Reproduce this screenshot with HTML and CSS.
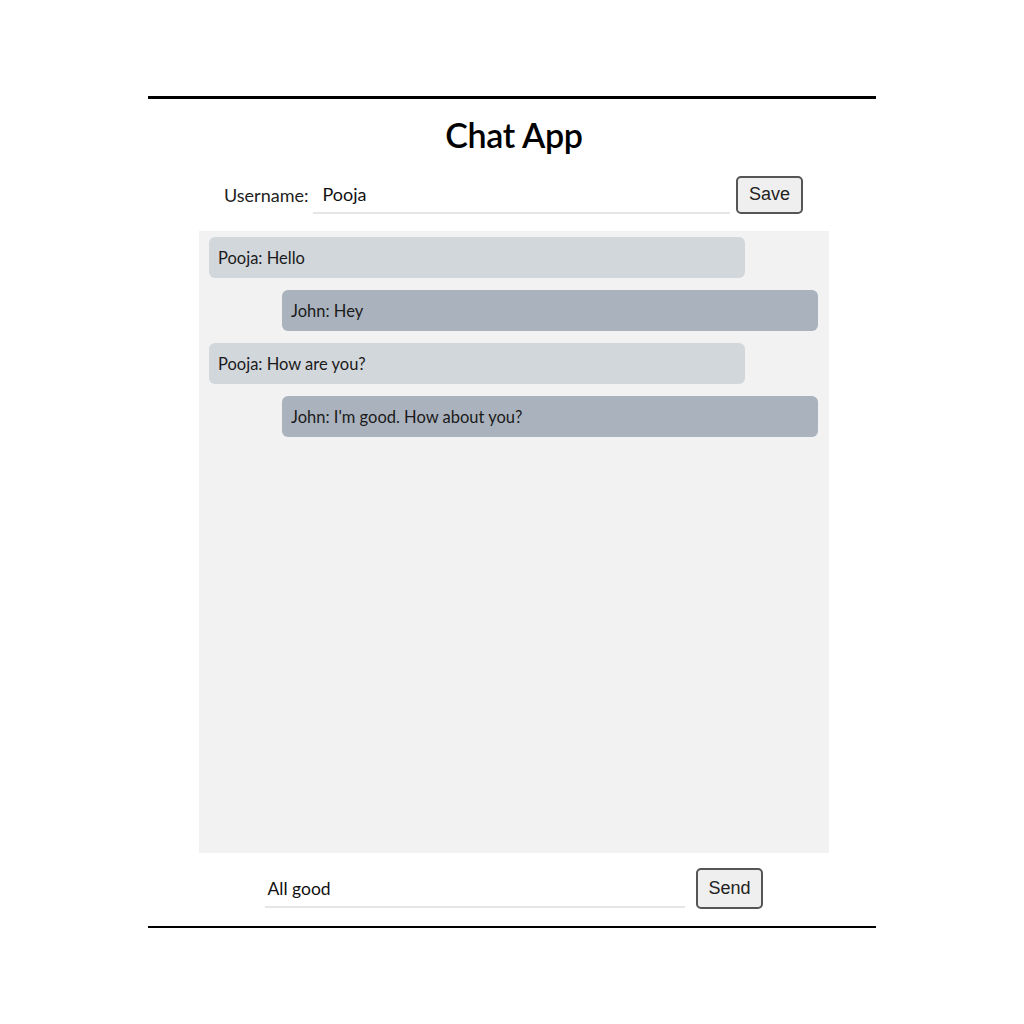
FILE: index.html
```html
<!DOCTYPE html>
<html lang="en">
<head>
    <meta charset="UTF-8">
    <title>Chat App</title>
    <link rel="stylesheet" href="styles.css">
</head>
<body>
    <div class="app">
        <h1>Chat App</h1>

        <!-- 사용자 이름 -->
        <div class="user-row">
            <label for="username">Username:</label>
            <input type="text" id="username" class="line-input user-input" value="Pooja">
            <button class="plain-button">Save</button>
        </div>

        <!-- 메시지 목록 -->
        <div class="messages">
            <div class="msg mine">Pooja: Hello</div>
            <div class="msg theirs">John: Hey</div>
            <div class="msg mine">Pooja: How are you?</div>
            <div class="msg theirs">John: I'm good. How about you?</div>
        </div>

        <!-- 입력 영역 -->
        <div class="send-row">
            <input type="text" class="line-input send-input" value="All good">
            <button class="plain-button">Send</button>
        </div>
    </div>
</body>
</html>
```

FILE: styles.css
```css
body {
    margin: 0;
    background: #fff;
    font-family: 'Lato', 'Noto Sans', sans-serif;
    color: #111;
}

.app {
    width: 728px;
    margin: 96px auto 0;
    border-top: 3px solid #000;
    border-bottom: 2px solid #000;
    display: flex;
    flex-direction: column;
    align-items: center;
}

h1 {
    font-size: 34px;
    font-weight: 600;
    margin: 15px 0 0;
    line-height: 42px;
    color: #000;
    letter-spacing: -0.3px;
    padding-left: 4px;
}

.user-row {
    display: flex;
    align-items: center;
    margin-top: 19px;
    width: 579px;
    margin-left: 3px;
}
.user-row label {
    font-size: 18px;
    color: #222;
    margin-right: 5px;
}

.line-input {
    font-family: 'Lato', sans-serif;
    font-size: 18px;
    color: #111;
    border: none;
    border-bottom: 2px solid #e6e6e6;
    padding: 6px 9px 7px;
    outline: none;
    background: transparent;
}
.user-input { width: 400px; margin-right: 6px; margin-top: 2px; }

.plain-button {
    font-family: 'Liberation Sans', Arial, sans-serif;
    font-size: 18px;
    color: #222;
    background: #efefef;
    border: 2px solid #555;
    border-radius: 5px;
    padding: 0 11px;
    height: 38px;
    cursor: pointer;
}

/* 메시지 영역 */
.messages {
    margin-top: 17px;
    margin-left: 4px;
    width: 610px;
    height: 602px;
    padding: 6px 10px 14px;
    background: #f2f2f2;
    display: flex;
    flex-direction: column;
    gap: 12px;
}
.msg {
    width: 536px;
    height: 41px;
    box-sizing: border-box;
    padding: 0 9px;
    display: flex;
    align-items: center;
    font-size: 16.5px;
    border-radius: 6px;
    color: #1a1a1a;
}
.msg.mine { background: #d2d7dc; align-self: flex-start; }
.msg.theirs { background: #aab3bd; align-self: flex-end; margin-right: 1px; }

.send-row {
    display: flex;
    align-items: center;
    margin-top: 15px;
    margin-bottom: 17px;
    margin-left: 4px;
}
.send-input { width: 409px; margin-right: 11px; margin-top: 2px; padding-left: 2px; font-size: 17.5px; }
.send-row .plain-button { height: 41px; padding: 0 10px; }
```
